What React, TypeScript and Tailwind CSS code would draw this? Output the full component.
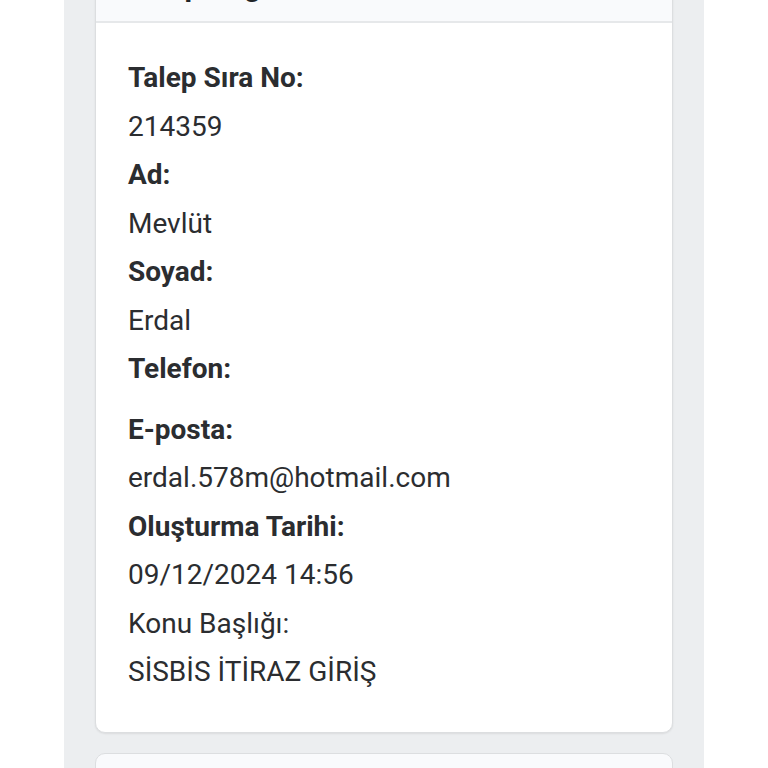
import React from 'react';

const rows: { label: string; value?: string; bold?: boolean }[] = [
    { label: 'Talep Sıra No:', value: '214359', bold: true },
    { label: 'Ad:', value: 'Mevlüt', bold: true },
    { label: 'Soyad:', value: 'Erdal', bold: true },
    { label: 'Telefon:', value: '', bold: true },
    { label: 'E-posta:', value: 'erdal.578m@hotmail.com', bold: true },
    { label: 'Oluşturma Tarihi:', value: '09/12/2024 14:56', bold: true },
    { label: 'Konu Başlığı:', value: 'SİSBİS İTİRAZ GİRİŞ', bold: false },
];

export default function App() {
    return (
        <div className="h-[768px] overflow-hidden bg-white" style={{ fontFamily: 'Roboto, "Noto Sans", sans-serif' }}>
            <div className="mx-[64px] min-h-[900px] bg-[#eceef0] px-[31px]">
                {/* Talep card */}
                <section className="-mt-[40px] rounded-[10px] border border-[#dcdee0] bg-white shadow-[0_1px_2px_rgba(0,0,0,0.08)]">
                    <div className="h-[62px] rounded-t-[10px] border-b-2 border-[#e6e8ea] bg-[#f9fafc] px-[32px] pt-[7px]">
                        <h2 className="text-[30px] font-bold leading-[36px] text-[#212529]">Talep Bilgileri</h2>
                    </div>
                    <div className="px-[32px] pt-[31px] pb-[35px] text-[28px] text-[#2b2d30]">
                        {rows.map(r => (
                            <div key={r.label}>
                                <div className={`leading-[48.5px] ${r.bold ? 'font-bold' : ''}`}>{r.label}</div>
                                {r.value ? (
                                    <div className="leading-[48.5px]">{r.value}</div>
                                ) : (
                                    <div className="h-[12px]" />
                                )}
                            </div>
                        ))}
                    </div>
                </section>

                {/* Next card */}
                <section className="mt-[20px] h-[80px] rounded-[10px] border border-[#dcdee0] bg-[#f9fafc]" />
            </div>
        </div>
    );
}
